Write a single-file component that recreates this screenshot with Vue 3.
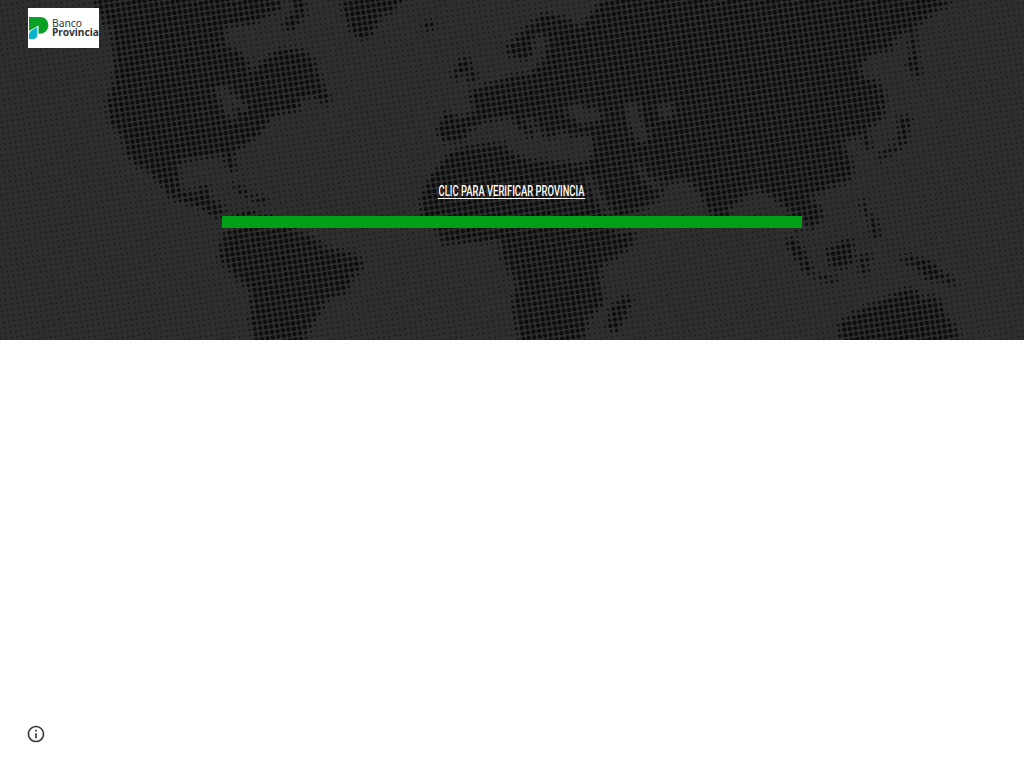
<script setup>
// Landmasses of the halftone banner, as flat x,y lists.
const land = [
  [88,-6,98,10,105,25,110,27,115,63,112,88,107,103,110,123,122,137,125,153,133,163,150,172,162,187,175,200,190,203,205,210,218,219,223,213,222,203,210,200,209,184,199,187,197,193,180,190,177,167,187,160,223,155,228,171,236,171,233,153,257,137,273,116,301,109,300,98,313,97,325,104,331,103,322,82,312,57,295,47,277,50,258,65,251,76,247,60,237,50,225,45,224,27,245,24,258,22,270,12,280,10,284,-6],
  [293,-6,304,-6,306,14,292,31,281,27,293,12],
  [340,-6,406,-6,392,12,380,16,372,35,362,40,350,30,345,15],
  [245,210,230,225,221,240,219,257,235,277,250,290,253,346,299,346,317,317,327,298,347,293,353,277,364,265,357,255,323,247,313,237,293,229,270,216],
  [604,-6,596,8,580,27,567,18,543,13,523,30,506,47,510,56,525,60,533,52,533,40,541,34,549,39,543,62,530,73,510,77,488,84,469,93,475,112,460,118,445,112,436,132,443,141,463,142,470,130,483,122,510,117,518,127,532,140,533,130,523,117,533,118,547,138,555,138,559,130,567,133,569,138,590,133,594,143,592,157,587,163,567,163,527,160,510,153,503,142,470,146,450,152,430,177,423,193,420,213,437,230,443,244,500,240,503,260,517,283,512,307,521,346,584,346,587,320,604,303,599,280,600,267,630,247,637,232,620,232,625,215,645,208,661,197,665,183,687,180,703,197,710,213,720,228,727,224,730,208,753,190,766,194,777,200,791,213,797,233,801,238,798,220,805,225,813,229,823,217,821,207,807,197,830,188,850,180,854,170,850,157,842,143,860,133,867,150,873,149,866,130,883,117,886,100,880,82,863,77,860,67,870,55,893,48,895,36,913,30,920,22,947,5,951,-6],
  [911,30,915,30,918,55,922,77,915,76,907,67,911,53],
  [900,116,911,116,906,143,892,153,880,160,879,153,897,145],
  [463,56,468,57,472,68,478,79,469,83,467,70,455,80,450,77,455,69],
  [423,22,435,22,435,28,426,30],
  [628,295,632,300,627,315,615,334,608,328,612,304],
  [783,241,793,238,803,248,814,274,806,273,796,257],
  [814,274,837,278,836,282,820,281],
  [826,250,846,240,854,239,851,263,842,269,829,265],
  [858,256,871,254,870,261,865,263,869,274,862,275],
  [859,200,865,200,867,211,876,218,881,237,872,238,870,221,861,207],
  [900,256,913,257,930,261,943,273,958,282,956,286,942,280,925,280,920,270,907,263],
  [839,322,860,310,877,302,903,290,917,291,925,299,932,295,940,301,945,315,957,330,962,346,840,346],
  [231,185,240,187,255,196,269,199,262,204,245,197],
]

// Seas and lakes enclosed by the landmasses.
const water = [
  [565,111,577,102,587,109,597,106,602,120,580,125],
  [623,105,637,103,643,124,650,139,640,145,631,130],
  [657,106,672,102,674,114,662,119],
  [584,176,590,173,600,193,620,223,628,232,616,232,607,219],
  [632,162,637,163,652,180,662,181,661,188,649,187],
  [214,89,226,86,241,101,250,106,244,113,233,104,237,119,230,122,222,108],
]

function inside(poly, x, y) {
  let hit = false
  for (let i = 0, j = poly.length - 2; i < poly.length; j = i, i += 2) {
    const yi = poly[i + 1]
    const yj = poly[j + 1]
    if (yi > y !== yj > y && x < ((poly[j] - poly[i]) * (y - yi)) / (yj - yi) + poly[i]) hit = !hit
  }
  return hit
}
const isLand = (x, y) => land.some(p => inside(p, x, y)) && !water.some(p => inside(p, x, y))

const pitch = 5.5
const angle = (-8.5 * Math.PI) / 180
const cos = Math.cos(angle)
const sin = Math.sin(angle)
const probes = [
  [0, 0], [1.5, 1.5], [-1.5, 1.5], [1.5, -1.5], [-1.5, -1.5],
  [4, 0], [-4, 0], [0, 4], [0, -4],
]

let landDots = ''
let seaDots = ''
for (let r = -5; r < 95; r++) {
  for (let c = -15; c < 195; c++) {
    const x = (c * cos - r * sin) * pitch
    const y = (c * sin + r * cos) * pitch
    if (x < -4 || x > 1028 || y < -4 || y > 344) continue
    const cover = probes.filter(([dx, dy]) => isLand(x + dx, y + dy)).length / probes.length
    const rad = cover ? 0.9 + cover * 1.3 : 0.95
    const d = `M${(x - rad).toFixed(2)} ${y.toFixed(2)}a${rad} ${rad} 0 1 0 ${2 * rad} 0a${rad} ${rad} 0 1 0 ${-2 * rad} 0z`
    if (cover) landDots += d
    else seaDots += d
  }
}
</script>

<template>
  <div class="page">
    <header class="banner">
      <svg class="map" width="1024" height="340" viewBox="0 0 1024 340" aria-hidden="true">
        <path class="sea" :d="seaDots" />
        <path class="land" :d="landDots" />
      </svg>
      <a class="logo" href="#" aria-label="Banco Provincia">
        <svg width="71" height="40" viewBox="0 0 71 40">
          <path d="M1 9H11.500C17 9 20.300 12.500 20.300 17.200S17 25.700 11.500 25.700H10.500V17.500L1 23Z" fill="#0a9f25" />
          <path d="M9.300 19.300V26.500C9.300 29.500 7.500 31 5 31H1V27C1 23.500 4.500 21.500 9.300 19.300Z" fill="#09b2ca" />
          <text x="24" y="18.800" font-size="10" textLength="30" lengthAdjust="spacingAndGlyphs">Banco</text>
          <text x="24" y="28.200" font-size="10.500" font-weight="700" textLength="47" lengthAdjust="spacingAndGlyphs">Provincia</text>
        </svg>
      </a>
      <div class="content">
        <a class="verify" href="#">
          <svg width="150" height="24" viewBox="0 0 150 24">
            <text x="1.500" y="16" textLength="146" lengthAdjust="spacingAndGlyphs">CLIC PARA VERIFICAR PROVINCIA</text>
            <path d="M1 18.500H148" stroke="#fff" />
          </svg>
        </a>
        <div class="bar"></div>
      </div>
    </header>
    <main class="body"></main>
    <footer class="footer">
      <svg width="24" height="24" viewBox="0 0 24 24" fill="#3c3c3e">
        <path d="M11 7h2v2h-2zm0 4h2v6h-2zm1-9C6.480 2 2 6.480 2 12s4.480 10 10 10 10-4.480 10-10S17.520 2 12 2zm0 18c-4.410 0-8-3.590-8-8s3.590-8 8-8 8 3.590 8 8-3.590 8-8 8z" transform="translate(2 2) scale(.833)" />
      </svg>
    </footer>
  </div>
</template>

<style>
body { margin: 0; background: #fff; }
</style>

<style scoped>
.page { display: flex; flex-direction: column; width: 1024px; height: 768px; overflow: hidden; background: #fff; }
.banner { position: relative; display: flex; flex-direction: column; height: 340px; background: #2e2e2e; }
.map { position: absolute; inset: 0; }
.sea { fill: #1c1c1c; }
.land { fill: #0e0e0e; }
.logo { position: relative; align-self: flex-start; width: 71px; height: 40px; margin: 8px 0 0 28px; background: #fff; }
.logo svg { display: block; }
.logo text { font-family: "Noto Sans", sans-serif; fill: #303438; }
.content { position: relative; display: flex; flex-direction: column; align-items: center; padding-top: 132px; }
.verify, .verify svg { display: block; overflow: visible; }
.verify { height: 24px; }
.verify text { font-family: "Roboto", sans-serif; font-size: 14px; font-weight: 500; fill: #fff; }
.bar { width: 580px; height: 12px; margin-top: 12px; background: #029f19; }
.body { flex: 1; }
.footer { height: 24px; padding: 0 24px 22px; }
.footer svg { display: block; }
</style>
